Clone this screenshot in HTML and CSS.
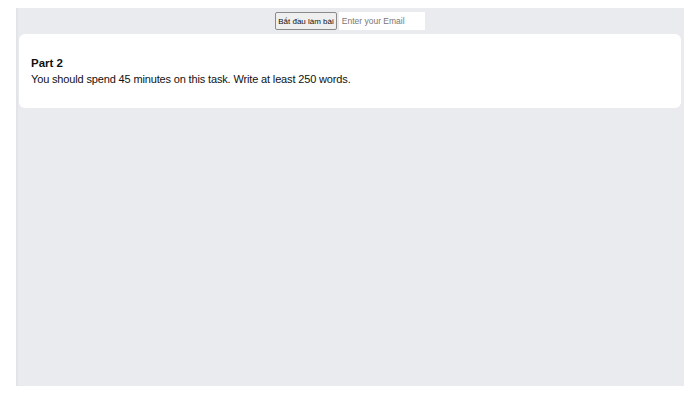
FILE: index.html
```html
<!DOCTYPE html>
<html lang="vi">
<head>
    <meta charset="UTF-8">
    <meta name="viewport" content="width=device-width, initial-scale=1.0">
    <title>Writing Test</title>
    <link rel="stylesheet" href="styles.css">
</head>
<body>

<div class="page">
    <div class="toolbar">
        <button class="start-btn">Bắt đầu làm bài</button>
        <input class="email-input" type="email" placeholder="Enter your Email">
    </div>

    <section class="task-card">
        <h3>Part 2</h3>
        <p>You should spend 45 minutes on this task. Write at least 250 words.</p>
    </section>
</div>

</body>
</html>
```

FILE: styles.css
```css
body {
    font-family: "Liberation Sans", Arial, sans-serif;
    margin: 8px 16px;
    padding: 0;
    background-color: #fff;
}
.page {
    background-color: #e9ebee;
    height: 378px;
    padding: 4px 3px 4px 1px;
    box-sizing: border-box;
    border-left: 2px solid #e2e4e8;
}
.toolbar {
    display: flex;
    justify-content: center;
    align-items: center;
    gap: 2px;
    height: 18px;
}
.start-btn {
    font-family: "Liberation Sans", Arial, sans-serif;
    font-size: 8px;
    height: 18px;
    padding: 0 2px;
    background-color: #efefef;
    border: 1px solid #8a8a8a;
    border-radius: 2px;
    color: #111;
}
.email-input {
    font-family: "Liberation Sans", Arial, sans-serif;
    font-size: 8.5px;
    width: 86px;
    height: 18px;
    box-sizing: border-box;
    border: none;
    padding: 0 3px;
    background-color: #fff;
}
.email-input::placeholder {
    color: #777;
}
.task-card {
    background-color: #fff;
    border-radius: 6px;
    margin-top: 4px;
    padding: 22px 12px 21px;
}
.task-card h3 {
    margin: 0;
    font-size: 11.5px;
    font-weight: 700;
    line-height: 15px;
    color: #111;
}
.task-card p {
    margin: 0;
    font-size: 11px;
    letter-spacing: -0.15px;
    line-height: 16px;
    color: #111;
}
```
